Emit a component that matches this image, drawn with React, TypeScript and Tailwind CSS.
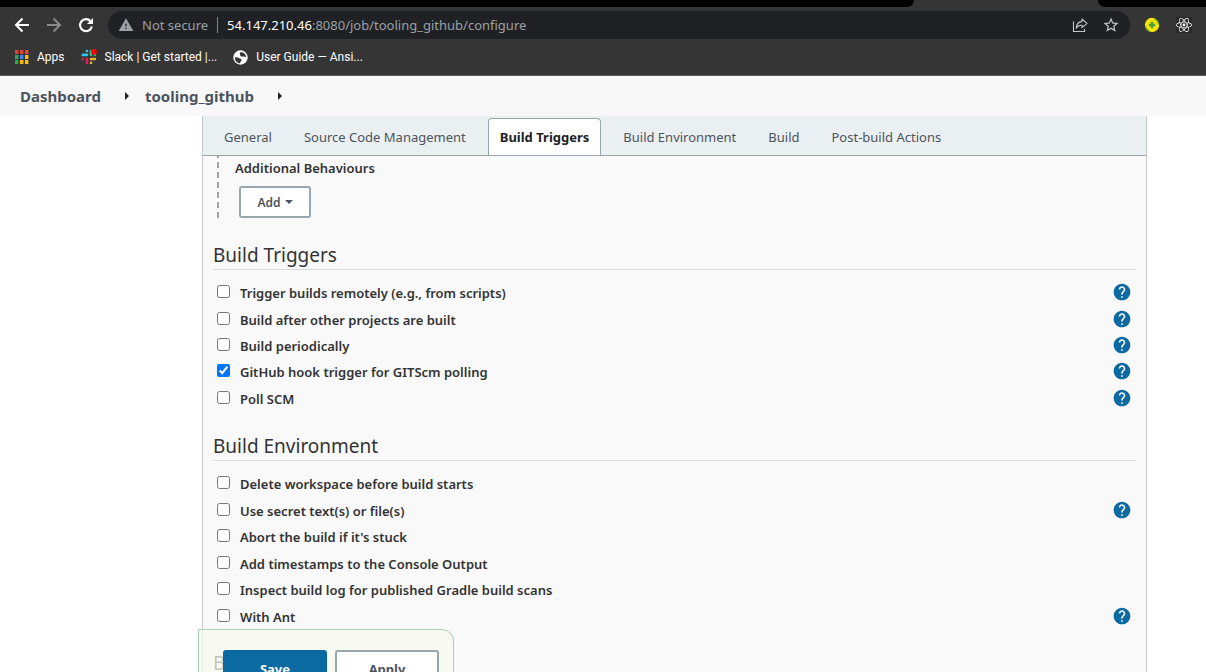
import type { ReactNode } from "react";
import { MdHelp, MdStarBorder, MdWarning } from "react-icons/md";
import { FaReact } from "react-icons/fa";

type Option = { label: string; checked?: boolean; help?: boolean };

const triggers: Option[] = [
  { label: "Trigger builds remotely (e.g., from scripts)", help: true },
  { label: "Build after other projects are built", help: true },
  { label: "Build periodically", help: true },
  { label: "GitHub hook trigger for GITScm polling", checked: true, help: true },
  { label: "Poll SCM", help: true },
];

const environment: Option[] = [
  { label: "Delete workspace before build starts" },
  { label: "Use secret text(s) or file(s)", help: true },
  { label: "Abort the build if it's stuck" },
  { label: "Add timestamps to the Console Output" },
  { label: "Inspect build log for published Gradle build scans" },
  { label: "With Ant", help: true },
];

const tabs = [
  "General",
  "Source Code Management",
  "Build Triggers",
  "Build Environment",
  "Build",
  "Post-build Actions",
];

function BackIcon() {
  return (
    <svg width="20" height="20" viewBox="0 0 20 20" fill="none" stroke="currentColor" strokeWidth="2">
      <path d="M17 10H4.5M10.5 3.5L4 10L10.5 16.5" />
    </svg>
  );
}

function ForwardIcon() {
  return (
    <svg width="20" height="20" viewBox="0 0 20 20" fill="none" stroke="currentColor" strokeWidth="2">
      <path d="M3 10H15.5M9.5 3.5L16 10L9.5 16.5" />
    </svg>
  );
}

function ReloadIcon() {
  return (
    <svg width="20" height="20" viewBox="0 0 20 20" fill="none">
      <path d="M15.9 11.5A6 6 0 1 1 14.6 6.2" stroke="currentColor" strokeWidth="2.1" />
      <path d="M17 3V9H11Z" fill="currentColor" />
    </svg>
  );
}

function ShareIcon() {
  return (
    <svg width="16" height="16" viewBox="0 0 16 16" fill="none" stroke="currentColor" strokeWidth="1.1">
      <path d="M1.5 4.5V14.5H12.5V12" />
      <path d="M10 2L15 6.3L10 10.6V8.2C7.3 8 5.4 9 4.2 11.2C4.5 7.2 6.6 4.9 10 4.4Z" strokeLinejoin="round" />
    </svg>
  );
}

function AppsIcon() {
  const colors = ["#ea4335", "#ea4335", "#ea4335", "#34a853", "#4285f4", "#fbbc04", "#34a853", "#fbbc04", "#fbbc04"];
  return (
    <svg width="14" height="14" viewBox="0 0 14 14">
      {colors.map((c, i) => (
        <rect key={i} x={(i % 3) * 5} y={Math.floor(i / 3) * 5} width="3.4" height="4" fill={c} />
      ))}
    </svg>
  );
}

function SlackIcon() {
  return (
    <svg width="16" height="16" viewBox="0 0 17 17" strokeWidth="2.8" strokeLinecap="round" fill="none">
      <path d="M6.3 2.1H6.4M1.9 6.3H6.3" stroke="#36c5f0" />
      <path d="M10.5 2.3V6.3M14.6 6.3H14.7" stroke="#2eb67d" />
      <path d="M6.3 10.6V14.8M1.9 10.6H2" stroke="#e01e5a" />
      <path d="M10.6 10.6H14.8M10.6 14.8H10.7" stroke="#ecb22e" />
      <circle cx="13.8" cy="3" r="3" fill="#ff0000" />
    </svg>
  );
}

function GlobeIcon() {
  return (
    <svg width="15" height="15" viewBox="0 0 15 15">
      <circle cx="7.5" cy="7.5" r="7.2" fill="#fff" />
      <path d="M1.8 7.2C3.6 7 5 7.2 6 8.1C7 9 8.6 8.6 8.6 10C8.6 11.3 7.2 11.4 7.1 13.2C4.2 13.2 1.8 10.7 1.8 7.2Z" fill="#353535" />
      <path d="M7.2 2.4C9.4 1.7 12.9 3.6 13.2 7.2C11.8 7.2 11.4 6.4 10 6.6C8.4 6.8 7.2 6.4 7.3 5.2C7.3 4.2 6.3 3.6 7.2 2.4Z" fill="#353535" />
    </svg>
  );
}

function PlusBadgeIcon() {
  return (
    <svg width="16" height="16" viewBox="0 0 16 16">
      <circle cx="8" cy="8" r="7.2" fill="#f7e600" />
      <path d="M8.5 0.8A7.2 7.2 0 0 1 15.2 8.5L13.6 5.8C12.6 3.6 11 2 8.5 0.8Z" fill="#4f9a3a" />
      <path d="M0.8 7.5A7.2 7.2 0 0 0 7.5 15.2C4.5 13.6 2.3 11.4 0.8 7.5Z" fill="#4f9a3a" />
      <path d="M8 4.8V11.2M4.8 8H11.2" stroke="#4f9a3a" strokeWidth="2.6" />
    </svg>
  );
}

function Bookmark({ icon, children }: { icon: ReactNode; children: ReactNode }) {
  return (
    <a href="#" className="flex items-center gap-2 whitespace-nowrap">
      {icon}
      {children}
    </a>
  );
}

function Browser() {
  return (
    <header className="bg-[#353535] border-b border-[#5c5c5c] text-white">
      <div className="flex h-[7px]">
        <div className="flex-1 rounded-br-lg bg-black" />
        <div className="w-[184px]" />
        <div className="w-[108px] rounded-bl-lg bg-black" />
      </div>
      <div className="flex h-9 items-center pl-3 pr-[14px]">
        <nav className="flex items-center gap-3">
          <button aria-label="Back"><BackIcon /></button>
          <button aria-label="Forward" className="text-[#8a8a8a]"><ForwardIcon /></button>
          <button aria-label="Reload"><ReloadIcon /></button>
        </nav>
        <div className="ml-3 flex h-7 flex-1 items-center rounded-full bg-[#202124] pl-[10px] pr-[10px] text-[13px] text-[#9aa0a6]">
          <MdWarning size={16} />
          <span className="ml-2 pt-px whitespace-nowrap">Not secure</span>
          <span className="ml-[9px] h-4 w-px bg-[#80868b]" />
          <span className="ml-[9px] flex-1 pt-px whitespace-nowrap">
            <span className="text-white">54.147.210.46</span>:8080/job/tooling_github/configure
          </span>
          <div className="flex items-center gap-[14px] text-[#c4c7ca]">
            <button aria-label="Share"><ShareIcon /></button>
            <button aria-label="Bookmark"><MdStarBorder size={18} /></button>
          </div>
        </div>
        <div className="ml-[14px] flex items-center gap-4">
          <button aria-label="Extension"><PlusBadgeIcon /></button>
          <button aria-label="React tools" className="bg-[#2a2a2a]"><FaReact size={16} /></button>
        </div>
      </div>
      <div className="flex h-8 items-start gap-4 pl-[15px] pt-[5px] font-['Roboto','Noto_Sans',sans-serif] text-[12px] leading-[18px]">
        <Bookmark icon={<AppsIcon />}>Apps</Bookmark>
        <Bookmark icon={<SlackIcon />}>Slack | Get started |...</Bookmark>
        <Bookmark icon={<GlobeIcon />}>User Guide — Ansi...</Bookmark>
      </div>
    </header>
  );
}

function Chevron() {
  return (
    <svg width="4" height="8" viewBox="0 0 4 8" fill="#222">
      <path d="M0 0L4 4L0 8Z" />
    </svg>
  );
}

function Heading({ children }: { children: ReactNode }) {
  return (
    <h2 className="flex h-12 items-end border-b border-[#dcdcdc] text-[19px] leading-7 text-[#333]">{children}</h2>
  );
}

function Options({ items }: { items: Option[] }) {
  return (
    <>
      {items.map((o) => (
        <div key={o.label} className="flex items-center justify-between pr-1 pl-1">
          <label className="flex items-center gap-[10px] text-[13px] leading-5 font-semibold text-[#333]">
            <input type="checkbox" defaultChecked={o.checked} className="mb-[3px] size-[13px]" />
            {o.label}
          </label>
          {o.help && (
            <button aria-label={"Help for " + o.label} className="mb-[2px] text-[#0b6aa2]">
              <MdHelp size={20} />
            </button>
          )}
        </div>
      ))}
    </>
  );
}

export default function App() {
  return (
    <div className="flex h-screen flex-col overflow-hidden bg-white font-['Noto_Sans','Open_Sans',sans-serif]">
      <Browser />
      <nav className="flex h-10 shrink-0 items-center bg-[#f8f8f8] pl-5 text-[15px] font-bold text-[#4d545d]">
        <a href="#">Dashboard</a>
        <span className="ml-6 mr-4"><Chevron /></span>
        <a href="#">tooling_github</a>
        <span className="ml-6"><Chevron /></span>
      </nav>
      <main className="relative ml-[202px] mr-[59px] flex-1 border-x border-[#c4c8ca] bg-[#f9f9f9]">
        <div className="flex h-10 items-end border-b border-[#98a6ad] bg-[#eaeff2] pl-[5px] text-[13px] text-[#4d545d]">
          {tabs.map((t) =>
            t === "Build Triggers" ? (
              <button
                key={t}
                className="mx-[6px] h-[37px] rounded-t border border-b-0 border-[#98a6ad] bg-white px-[11px] pt-px font-bold whitespace-nowrap text-[#222]"
              >
                {t}
              </button>
            ) : (
              <button key={t} className="h-[37px] px-4 pt-[2px] whitespace-nowrap">
                {t}
              </button>
            ),
          )}
        </div>
        <div className="px-[10px]">
          <div className="flex h-[66px] pl-1">
            <svg width="2" height="62" viewBox="0 0 2 62">
              <path d="M1 0V62" stroke="#a3a3a3" strokeWidth="2" strokeDasharray="6 4" strokeDashoffset="4" />
            </svg>
            <div className="flex flex-col items-start pl-4">
              <div className="mt-[2px] text-[13px] leading-5 font-semibold text-[#333]">Additional Behaviours</div>
              <button className="mt-2 ml-1 flex h-8 w-[72px] items-center justify-center gap-1 rounded-[3px] border-2 border-[#98a6ad] bg-white pt-px text-[12px] font-semibold text-[#4d545d]">
                Add
                <svg width="8" height="5" viewBox="0 0 8 5" fill="currentColor">
                  <path d="M0 0H8L4 4Z" />
                </svg>
              </button>
            </div>
          </div>
          <Heading>Build Triggers</Heading>
          <div className="my-[10px] grid h-[132px] auto-rows-fr">
            <Options items={triggers} />
          </div>
          <div className="-mt-[9px]">
            <Heading>Build Environment</Heading>
          </div>
          <div className="mt-[10px] grid h-[159px] auto-rows-fr">
            <Options items={environment} />
          </div>
          <Heading>Build</Heading>
        </div>
        <div className="absolute top-[513px] -left-[5px] flex h-20 gap-2 rounded-tr-xl border border-[#a9d0b8] bg-[#f7f8ee]/75 py-5 pr-[14px] pl-6 text-[13px] font-bold">
          <button className="h-10 w-[104px] rounded-[3px] bg-[#0b6aa2] text-white">Save</button>
          <button className="h-10 w-[104px] rounded-[3px] border-2 border-[#98a6ad] bg-white text-[#4d545d]">
            Apply
          </button>
        </div>
      </main>
    </div>
  );
}
